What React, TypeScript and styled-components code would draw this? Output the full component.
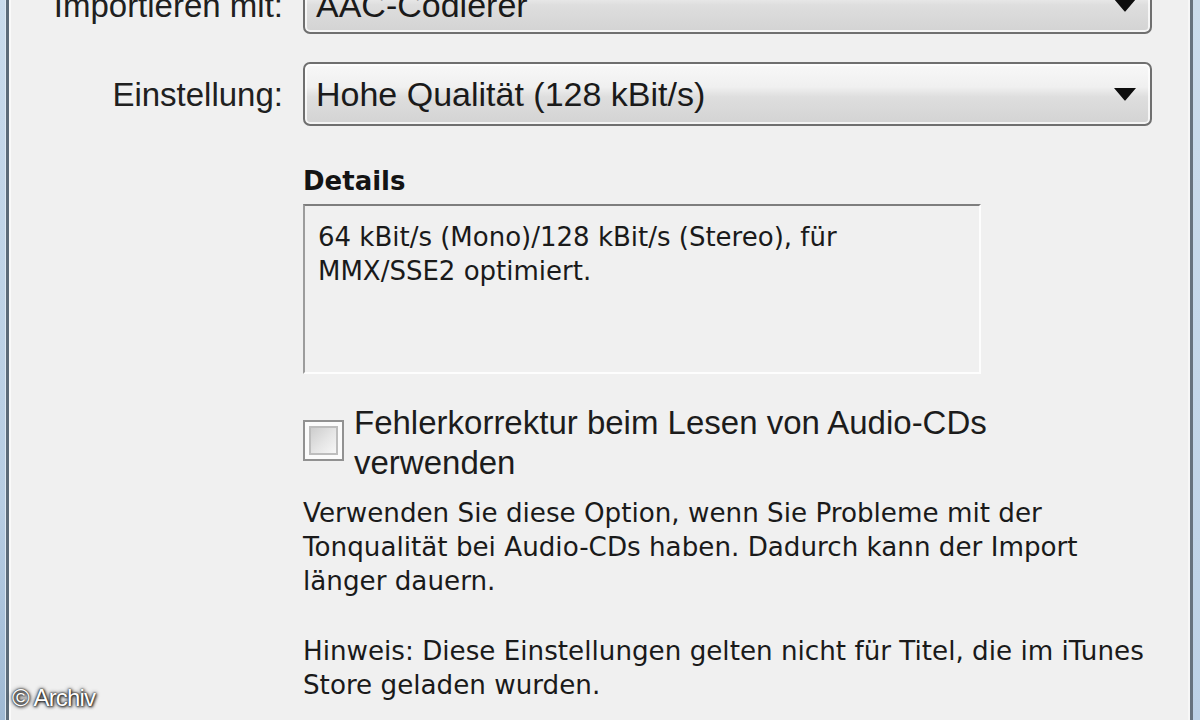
import React from "react";
import styled, { createGlobalStyle } from "styled-components";

const GlobalStyle = createGlobalStyle`
  html, body {
    margin: 0;
    padding: 0;
    background: #f0f0f0;
    overflow: hidden;
  }
  * { box-sizing: border-box; }
`;

const Window = styled.div`
  position: relative;
  display: flex;
  width: 1200px;
  height: 720px;
  overflow: hidden;
  background: #f0f0f0;
`;

const FrameLeft = styled.div`
  width: 9px;
  flex: none;
  background: linear-gradient(to bottom, #c9dbec, #b7cde3 70%, #9fb9d4);
  border-right: 3px solid #5c6b79;
  box-shadow: inset -1px 0 0 #dde8f2;
`;

const FrameRight = styled.div`
  width: 10px;
  flex: none;
  background: linear-gradient(to bottom, #cbdcec, #bcd1e6);
  border-left: 3px solid #66727e;
`;

const Client = styled.div`
  flex: 1;
  display: flex;
  flex-direction: column;
  border-left: 2px solid #fafafa;
  border-right: 2px solid #f7f7f7;
  background: #f0f0f0;
`;

const FieldGrid = styled.div`
  display: grid;
  grid-template-columns: 272px 849px;
  column-gap: 20px;
  row-gap: 28px;
  margin-top: -30px;
`;

const Label = styled.div<{ $shift?: number }>`
  align-self: center;
  text-align: right;
  font-family: "Liberation Sans", Arial, sans-serif;
  font-size: 33px;
  color: #202020;
  white-space: nowrap;
  padding-top: ${(p) => 2 + (p.$shift ?? 0) * 2}px;
`;

const Combo = styled.div<{ $shift?: number }>`
  display: flex;
  align-items: center;
  height: 64px;
  padding: ${(p) => p.$shift ?? 0}px 13px 0 11px;
  border: 2px solid #6f6f6f;
  border-radius: 7px;
  background: linear-gradient(
    to bottom,
    #f8f8f8 0%,
    #f0f0f0 38%,
    #dedede 55%,
    #d3d3d3 100%
  );
  box-shadow: inset 0 0 0 2px rgba(255, 255, 255, 0.75);
  font-family: "Liberation Sans", Arial, sans-serif;
  font-size: 34px;
  color: #1a1a1a;
  white-space: nowrap;
`;

const ComboText = styled.span`
  flex: 1;
`;

const Arrow = styled.svg`
  flex: none;
  width: 24px;
  height: 14px;
`;

const Panel = styled.div`
  display: flex;
  flex-direction: column;
  align-items: flex-start;
  margin-left: 292px;
`;

const Heading = styled.div`
  margin-top: 40px;
  font-family: "DejaVu Sans", Verdana, sans-serif;
  font-weight: bold;
  font-size: 26px;
  line-height: 30px;
  color: #141414;
`;

const DetailsBox = styled.div`
  margin-top: 8px;
  width: 678px;
  height: 170px;
  padding: 14px 13px 13px;
  border-style: solid;
  border-width: 2px;
  border-color: #7e7e7e #fdfdfd #fdfdfd #9c9c9c;
  background: #f0f0f0;
  font-family: "DejaVu Sans", Verdana, sans-serif;
  font-size: 26px;
  line-height: 34px;
  color: #1a1a1a;
  white-space: nowrap;
`;

const CheckRow = styled.label`
  display: flex;
  align-items: flex-start;
  gap: 10px;
  margin-top: 29px;
`;

const CheckBox = styled.span`
  flex: none;
  margin-top: 17px;
  width: 41px;
  height: 41px;
  border: 2px solid #919191;
  background: #fbfbfb;
  padding: 4px;
  display: flex;
`;

const CheckInner = styled.span`
  flex: 1;
  border: 2px solid #bdbdbd;
  background: linear-gradient(135deg, #cdcdcd 0%, #e6e6e6 55%, #f7f7f7 100%);
`;

const CheckLabel = styled.span`
  font-family: "Liberation Sans", Arial, sans-serif;
  font-size: 33px;
  line-height: 40px;
  color: #1c1c1c;
  white-space: nowrap;
`;

const Note = styled.p<{ $gap: number }>`
  margin: ${(p) => p.$gap}px 0 0 0;
  font-family: "DejaVu Sans", Verdana, sans-serif;
  font-size: 26.2px;
  line-height: 34px;
  color: #1a1a1a;
  white-space: nowrap;
`;

const Watermark = styled.div`
  position: absolute;
  left: 12px;
  bottom: 9px;
  font-family: "Liberation Sans", Arial, sans-serif;
  font-size: 24px;
  line-height: 26px;
  color: #ffffff;
  text-shadow: 0 0 2px #000, 0 0 4px #222, 1px 1px 3px #333;
  letter-spacing: -0.8px;
`;

const DropArrow = () => (
  <Arrow viewBox="0 0 24 14">
    <path d="M1 1 L23 1 L12.8 13 Q12 14 11.2 13 Z" fill="#0d0d0d" />
  </Arrow>
);

export default function App() {
  return (
    <>
      <GlobalStyle />
      <Window>
        <FrameLeft />
        <Client>
          <FieldGrid>
            <Label $shift={3}>Importieren mit:</Label>
            <Combo $shift={6}>
              <ComboText>AAC-Codierer</ComboText>
              <DropArrow />
            </Combo>
            <Label>Einstellung:</Label>
            <Combo>
              <ComboText>Hohe Qualität (128 kBit/s)</ComboText>
              <DropArrow />
            </Combo>
          </FieldGrid>
          <Panel>
            <Heading>Details</Heading>
            <DetailsBox>
              64 kBit/s (Mono)/128 kBit/s (Stereo), für
              <br />
              MMX/SSE2 optimiert.
            </DetailsBox>
            <CheckRow>
              <CheckBox>
                <CheckInner />
              </CheckBox>
              <CheckLabel>
                Fehlerkorrektur beim Lesen von Audio-CDs
                <br />
                verwenden
              </CheckLabel>
            </CheckRow>
            <Note $gap={13}>
              Verwenden Sie diese Option, wenn Sie Probleme mit der
              <br />
              Tonqualität bei Audio-CDs haben. Dadurch kann der Import
              <br />
              länger dauern.
            </Note>
            <Note $gap={36}>
              Hinweis: Diese Einstellungen gelten nicht für Titel, die im iTunes
              <br />
              Store geladen wurden.
            </Note>
          </Panel>
        </Client>
        <FrameRight />
        <Watermark>© Archiv</Watermark>
      </Window>
    </>
  );
}
